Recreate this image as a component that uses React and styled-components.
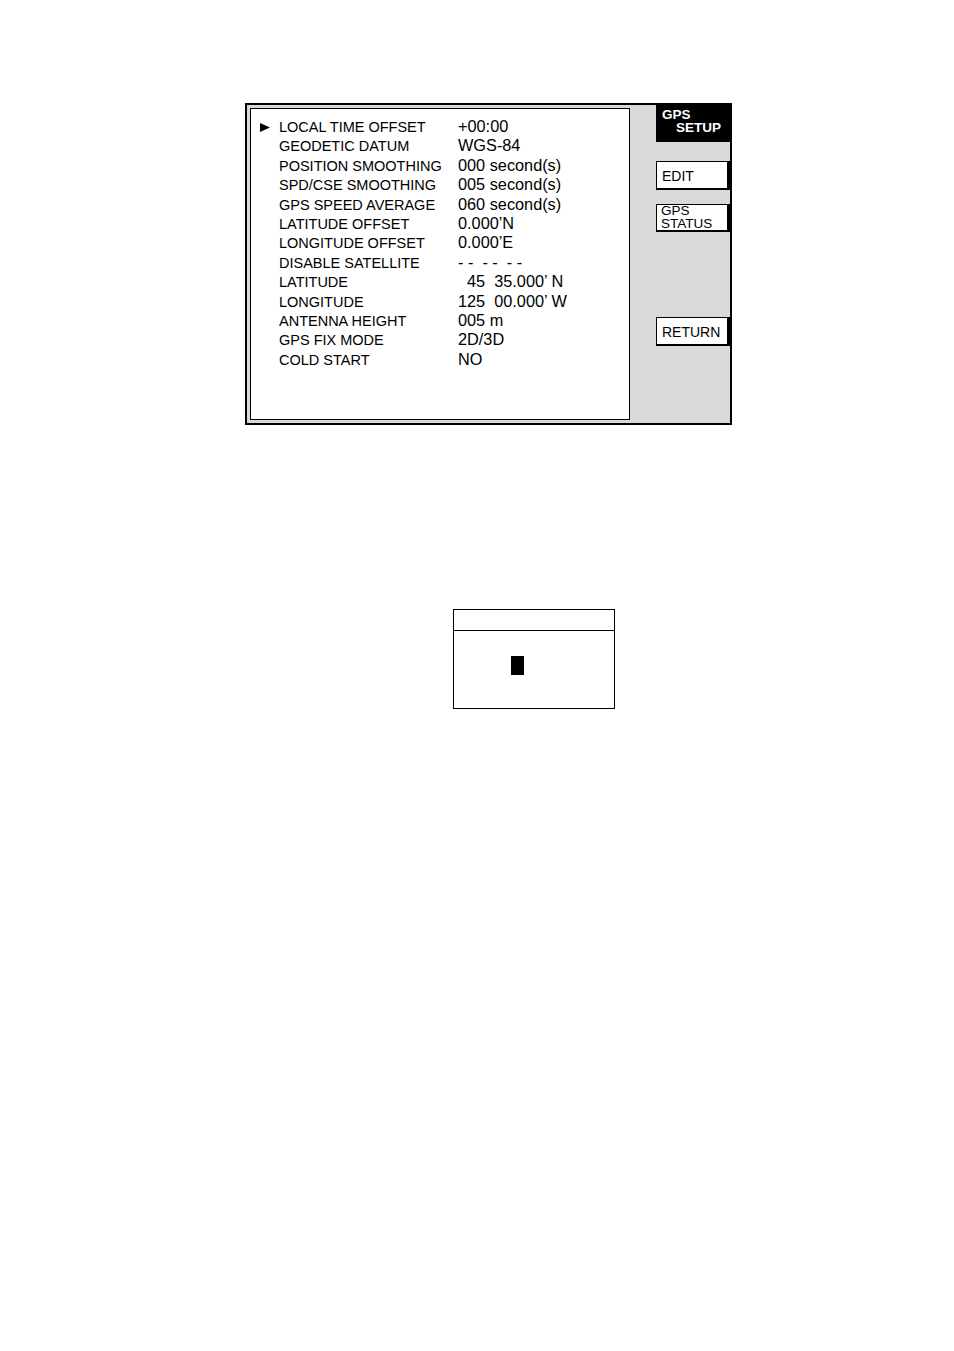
import styled, { createGlobalStyle } from 'styled-components';

const Global = createGlobalStyle`
  html, body {
    margin: 0;
    padding: 0;
    background: #ffffff;
  }
  body {
    font-family: "Liberation Sans", Arial, sans-serif;
    color: #000;
  }
`;

const rows = [
    {label: 'LOCAL TIME OFFSET', value: '+00:00', active: true},
    {label: 'GEODETIC DATUM', value: 'WGS-84'},
    {label: 'POSITION SMOOTHING', value: '000 second(s)'},
    {label: 'SPD/CSE SMOOTHING', value: '005 second(s)'},
    {label: 'GPS SPEED AVERAGE', value: '060 second(s)'},
    {label: 'LATITUDE OFFSET', value: '0.000’N'},
    {label: 'LONGITUDE OFFSET', value: '0.000’E'},
    {label: 'DISABLE SATELLITE', value: '- -  - -  - -'},
    {label: 'LATITUDE', value: '  45  35.000’ N'},
    {label: 'LONGITUDE', value: '125  00.000’ W'},
    {label: 'ANTENNA HEIGHT', value: '005 m'},
    {label: 'GPS FIX MODE', value: '2D/3D'},
    {label: 'COLD START', value: 'NO'},
];

export default function App() {
    return (
        <Page>
            <Global />
            <Frame>
                <Panel>
                    {rows.map((r) => (
                        <Row key={r.label}>
                            <Pointer>
                                {r.active && (
                                    <svg width="10" height="9" viewBox="0 0 10 9">
                                        <polygon points="0,0 10,4.5 0,9" fill="#000" />
                                    </svg>
                                )}
                            </Pointer>
                            <Label>{r.label}</Label>
                            <Value>{r.value}</Value>
                        </Row>
                    ))}
                </Panel>
                <Side>
                    <Title>
                        <span>GPS</span>
                        <span className="indent">SETUP</span>
                    </Title>
                    <SoftKey $top={19}>EDIT</SoftKey>
                    <SoftKey $top={14} $twoLine>
                        <span>GPS</span>
                        <span>STATUS</span>
                    </SoftKey>
                    <SoftKey $top={85}>RETURN</SoftKey>
                </Side>
            </Frame>
            <InputBox>
                <InputHeader />
                <InputBody>
                    <Cursor />
                </InputBody>
            </InputBox>
        </Page>
    );
}

const Page = styled.div`
    padding: 103px 0 0 245px;
    min-height: 1351px;
    box-sizing: border-box;
`;

const Frame = styled.div`
    display: flex;
    width: 487px;
    height: 322px;
    box-sizing: border-box;
    border: 2px solid #000;
    background: #d9d9d9;
`;

const Panel = styled.div`
    margin: 3px 0 3px 3px;
    width: 380px;
    height: 312px;
    box-sizing: border-box;
    border: 1px solid #000;
    background: #fff;
    padding-top: 7px;
`;

const Row = styled.div`
    display: grid;
    grid-template-columns: 28px 179px 1fr;
    height: 19.4px;
    align-items: center;
`;

const Pointer = styled.div`
    display: flex;
    align-items: center;
    padding-left: 9px;
    padding-top: 1px;
`;

const Label = styled.div`
    font-size: 14.5px;
    line-height: 19px;
    white-space: nowrap;
    padding-top: 2px;
`;

const Value = styled.div`
    font-size: 16.3px;
    line-height: 19px;
    white-space: pre;
`;

const Side = styled.div`
    display: flex;
    flex-direction: column;
    margin-left: 26px;
    width: 74px;
`;

const Title = styled.div`
    height: 37px;
    background: #000;
    color: #fff;
    font-weight: bold;
    font-size: 13.5px;
    line-height: 12.5px;
    display: flex;
    flex-direction: column;
    padding: 4px 0 0 6px;
    box-sizing: border-box;

    .indent {
        padding-left: 14px;
    }
`;

const SoftKey = styled.div`
    margin-top: ${(p) => p.$top}px;
    height: ${(p) => (p.$twoLine ? 28 : 29)}px;
    box-sizing: border-box;
    background: #fff;
    border-top: 1px solid #000;
    border-left: 1px solid #000;
    border-right: 3px solid #000;
    border-bottom: 2px solid #000;
    font-size: ${(p) => (p.$twoLine ? '13.5px' : '14px')};
    display: flex;
    flex-direction: column;
    justify-content: ${(p) => (p.$twoLine ? 'flex-start' : 'center')};
    line-height: ${(p) => (p.$twoLine ? '12.5px' : '16px')};
    padding-left: ${(p) => (p.$twoLine ? 4 : 5)}px;
    padding-top: ${(p) => (p.$twoLine ? 0 : 1)}px;
    overflow: hidden;
`;

const InputBox = styled.div`
    margin: 184px 0 0 208px;
    width: 162px;
    height: 100px;
    box-sizing: border-box;
    border: 1.5px solid #000;
    display: flex;
    flex-direction: column;
`;

const InputHeader = styled.div`
    height: 20px;
    border-bottom: 1.5px solid #000;
`;

const InputBody = styled.div`
    flex: 1;
    padding: 25px 0 0 57px;
`;

const Cursor = styled.div`
    width: 13px;
    height: 19px;
    background: #000;
`;
